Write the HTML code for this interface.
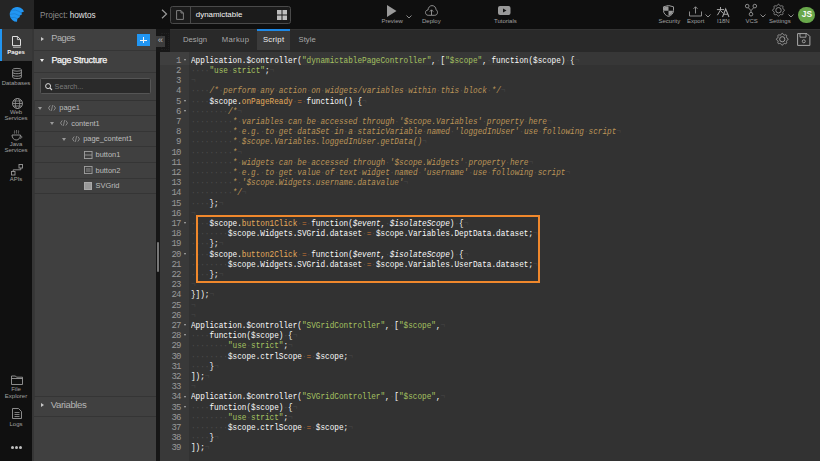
<!DOCTYPE html>
<html><head><meta charset="utf-8">
<style>
*{box-sizing:border-box;margin:0;padding:0}
html,body{width:820px;height:461px;overflow:hidden;background:#333;font-family:"Liberation Sans",sans-serif}
.a{position:absolute}
#hdr{left:0;top:0;width:820px;height:29px;background:#0f0f0f}
#logo{left:0;top:0;width:34px;height:29px;background:#252525}
.hl{position:absolute;font-size:6px;color:#a0a0a0;white-space:nowrap;line-height:7px}
#side{left:0;top:29px;width:32px;height:432px;background:#101010}
#sideact{left:0;top:29px;width:32px;height:32px;background:#3a3a3a;border-left:2px solid #2196f3}
.sl{position:absolute;font-size:6px;color:#a0a0a0;text-align:center;width:32px;left:0;line-height:6px}
#gap{left:32px;top:29px;width:2px;height:432px;background:#363636}
#panel{left:34px;top:29px;width:122px;height:432px;background:#404040}
.sep{position:absolute;left:34px;width:122px;height:1px;background:#353535}
.pt{position:absolute;font-size:8.2px;color:#b5b5b5;white-space:nowrap;line-height:10px}
.tri-r{position:absolute;width:0;height:0;border-top:2.1px solid transparent;border-bottom:2.1px solid transparent;border-left:3.8px solid #c8c8c8}
.tri-d{position:absolute;width:0;height:0;border-left:2.8px solid transparent;border-right:2.8px solid transparent;border-top:3.8px solid #f0f0f0}
.tri-d2{position:absolute;width:0;height:0;border-left:2.2px solid transparent;border-right:2.2px solid transparent;border-top:3px solid #999}
.tr{position:absolute;font-size:7.45px;color:#bdbdbd;white-space:nowrap;line-height:9px}
#split{left:156px;top:29px;width:4px;height:432px;background:#161616}
#ed{left:160px;top:52px;width:660px;height:409px;background:#323232}
#gut{left:160px;top:52px;width:29px;height:409px;background:#393939}
#tabs{left:160px;top:29px;width:660px;height:23px;background:#292929;border-top:1px solid #333}
.tab{position:absolute;font-size:7.7px;color:#a8a8a8;white-space:nowrap;line-height:9px;margin-top:-0.6px}
.ln{position:absolute;left:191.4px;font-family:"Liberation Mono",monospace;font-size:9px;transform:scaleX(0.85574);transform-origin:0 0;white-space:pre;color:#fafafa;line-height:10px;height:10px}
.gn{position:absolute;left:160px;width:20.7px;text-align:right;font-family:"Liberation Mono",monospace;font-size:9px;letter-spacing:-0.78px;color:#9a9a9a;line-height:10px;height:10px}
.fold{position:absolute;left:183.7px;width:0;height:0;border-left:1.5px solid transparent;border-right:1.5px solid transparent;border-top:2px solid #b0b0b0}
.ln i{font-style:normal}
.inv{color:#4c4c4c}
.eol{color:#474747}
.s{color:#a5c261}
.c{color:#bc9458;font-style:italic}
.c .inv{font-style:normal}
.f{color:#e4ab5c}
.o{color:#cc7833}
.p{font-style:italic}
svg{position:absolute;overflow:visible}
</style></head><body>
<div id="hdr" class="a"></div>
<div id="logo" class="a"></div>
<!-- logo -->
<svg style="left:0;top:0" width="34" height="29" viewBox="0 0 34 29"><path d="M24 11.6 A7.4 7.4 0 1 0 17 21.8 L17.3 18.7 L19.9 17.1 L19.6 15.8 L22.2 14.2 L21.2 12.7 Z" fill="#2196f3"/><path d="M10.5 10.8 Q15 8.6 21.2 12.7 M10 14.3 Q14.8 12.3 19.6 15.8 M11 17.8 Q14.3 16.3 17.3 18.7" fill="none" stroke="#1a78cc" stroke-width="0.7"/></svg>
<div class="hl" style="left:40px;top:11px;font-size:8.2px;line-height:9px"><span style="color:#8d8d8d">Project:</span><span style="display:inline-block;width:2px"></span><span style="color:#e3e3e3">howtos</span></div>
<!-- chevron -->
<svg style="left:161px;top:9px" width="7" height="10" viewBox="0 0 7 10"><path d="M1 0.8 L5.5 5 L1 9.2" fill="none" stroke="#9a9a9a" stroke-width="1.2"/></svg>
<!-- page box -->
<div class="a" style="left:170px;top:6px;width:121px;height:18px;border:1px solid #4a4a4a;border-radius:2.5px;background:#1b1b1b"></div>
<div class="a" style="left:189.5px;top:7px;width:1px;height:16px;background:#4a4a4a"></div>
<svg style="left:176px;top:10px" width="8" height="10" viewBox="0 0 8 10"><path d="M0.6 0.6 H5 L7.4 3 V9.4 H0.6 Z M5 0.6 V3 H7.4" fill="none" stroke="#8a8a8a" stroke-width="0.9"/></svg>
<div class="hl" style="left:195.8px;top:10.2px;font-size:7.9px;line-height:9px;color:#f4f4f4">dynamictable</div>
<svg style="left:277px;top:10px" width="10" height="10" viewBox="0 0 10 10"><rect x="0" y="0" width="4.5" height="4.5" fill="#bdbdbd"/><rect x="5.5" y="0" width="4.5" height="4.5" fill="#bdbdbd"/><rect x="0" y="5.5" width="4.5" height="4.5" fill="#bdbdbd"/><rect x="5.5" y="5.5" width="4.5" height="4.5" fill="#bdbdbd"/></svg>
<!-- Preview -->
<svg style="left:386.5px;top:4.5px" width="10" height="12" viewBox="0 0 10 12"><path d="M0 0 L9.5 6 L0 12 Z" fill="#9a9a9a"/></svg>
<svg style="left:406px;top:14.5px" width="6" height="4" viewBox="0 0 6 4"><path d="M0.5 0.5 L3 3 L5.5 0.5" fill="none" stroke="#9a9a9a" stroke-width="0.9"/></svg>
<div class="hl" style="left:381.5px;top:18.2px">Preview</div>
<!-- Deploy -->
<svg style="left:424.5px;top:4.5px" width="13" height="11" viewBox="0 0 13 11"><path d="M3.2 10.3 C1.5 10.3 0.5 9 0.5 7.5 C0.5 6 1.6 5 3 5 C3.2 2.5 4.8 0.6 7 0.6 C9.4 0.6 11 2.4 11 4.8 C12 5.2 12.5 6.2 12.5 7.4 C12.5 9 11.4 10.3 9.8 10.3 Z" fill="none" stroke="#9a9a9a" stroke-width="0.9"/><path d="M6.5 10 V5 M4.8 6.6 L6.5 4.8 L8.2 6.6" fill="none" stroke="#9a9a9a" stroke-width="0.9"/></svg>
<div class="hl" style="left:422px;top:18.2px">Deploy</div>
<!-- Tutorials -->
<svg style="left:497.5px;top:6px" width="13" height="9" viewBox="0 0 13 9"><rect x="0" y="0" width="12.5" height="9" rx="2" fill="#9a9a9a"/><path d="M5 2.5 L8.5 4.5 L5 6.5 Z" fill="#151515"/></svg>
<div class="hl" style="left:494px;top:18.2px">Tutorials</div>
<!-- Security -->
<svg style="left:662.5px;top:4.5px" width="11" height="12" viewBox="0 0 11 12"><path d="M5.5 0.5 L10.5 1.8 V5.5 C10.5 8.5 8.3 10.5 5.5 11.5 C2.7 10.5 0.5 8.5 0.5 5.5 V1.8 Z" fill="none" stroke="#9a9a9a" stroke-width="1"/><path d="M5.5 1.2 V5.8 H1 V2.2 Z" fill="#9a9a9a"/><path d="M5.5 5.8 H10 C9.9 8.2 8 10.1 5.5 10.9 Z" fill="#9a9a9a"/></svg>
<div class="hl" style="left:658.5px;top:18.2px">Security</div>
<!-- Export -->
<svg style="left:689px;top:5.5px" width="13" height="11" viewBox="0 0 13 11"><path d="M0.5 5.5 V10 H12.5 V5.5" fill="none" stroke="#9a9a9a" stroke-width="0.9"/><path d="M6.5 7.5 V0.8 M4.5 2.8 L6.5 0.8 L8.5 2.8" fill="none" stroke="#9a9a9a" stroke-width="0.9"/></svg>
<svg style="left:705px;top:13.8px" width="6" height="4" viewBox="0 0 6 4"><path d="M0.5 0.5 L3 3 L5.5 0.5" fill="none" stroke="#9a9a9a" stroke-width="0.9"/></svg>
<div class="hl" style="left:687px;top:18.2px">Export</div>
<!-- I18N -->
<svg style="left:712px;top:2px" width="22" height="16" viewBox="0 0 22 16"><path d="M4.9 7.6 H12 M8.5 5 V8.2 M8.5 8 L5.4 13.2 M8.6 8.6 L11.2 11.4" fill="none" stroke="#a8a8a8" stroke-width="1"/><path d="M10.5 15 L13.7 7 L17 15 M11.6 12.3 H15.9" fill="none" stroke="#a8a8a8" stroke-width="1.05"/></svg>
<div class="hl" style="left:717px;top:18.2px">I18N</div>
<!-- VCS -->
<svg style="left:745px;top:4px" width="12" height="12.5" viewBox="0 0 12 12.5"><circle cx="2.2" cy="2.1" r="1.8" fill="none" stroke="#9a9a9a" stroke-width="0.9"/><circle cx="9.8" cy="2.1" r="1.8" fill="none" stroke="#9a9a9a" stroke-width="0.9"/><circle cx="6" cy="10.2" r="1.8" fill="none" stroke="#9a9a9a" stroke-width="0.9"/><path d="M3.2 3.6 L6 6.6 L8.8 3.6 M6 6.6 V8.4" fill="none" stroke="#9a9a9a" stroke-width="0.9"/></svg>
<svg style="left:760px;top:14px" width="6" height="4" viewBox="0 0 6 4"><path d="M0.5 0.5 L3 3 L5.5 0.5" fill="none" stroke="#9a9a9a" stroke-width="0.9"/></svg>
<div class="hl" style="left:745.5px;top:18.2px">VCS</div>
<!-- Settings gear -->
<svg style="left:772px;top:4px" width="13" height="12.5" viewBox="-6.5 -6.25 13 12.5"><path d="M0.00 -5.95 L0.23 -5.92 L0.46 -5.83 L0.67 -5.69 L0.87 -5.49 L1.03 -5.20 L1.18 -4.91 L1.32 -4.69 L1.47 -4.52 L1.62 -4.39 L1.78 -4.30 L1.96 -4.25 L2.16 -4.23 L2.38 -4.25 L2.64 -4.30 L2.94 -4.41 L3.26 -4.49 L3.54 -4.50 L3.80 -4.45 L4.02 -4.35 L4.21 -4.21 L4.35 -4.02 L4.45 -3.80 L4.50 -3.54 L4.49 -3.26 L4.41 -2.94 L4.30 -2.64 L4.25 -2.38 L4.23 -2.16 L4.25 -1.96 L4.30 -1.78 L4.39 -1.62 L4.52 -1.47 L4.69 -1.32 L4.91 -1.18 L5.20 -1.03 L5.49 -0.87 L5.69 -0.67 L5.83 -0.46 L5.92 -0.23 L5.95 0.00 L5.92 0.23 L5.83 0.46 L5.69 0.67 L5.49 0.87 L5.20 1.03 L4.91 1.18 L4.69 1.32 L4.52 1.47 L4.39 1.62 L4.30 1.78 L4.25 1.96 L4.23 2.16 L4.25 2.38 L4.30 2.64 L4.41 2.94 L4.49 3.26 L4.50 3.54 L4.45 3.80 L4.35 4.02 L4.21 4.21 L4.02 4.35 L3.80 4.45 L3.54 4.50 L3.26 4.49 L2.94 4.41 L2.64 4.30 L2.38 4.25 L2.16 4.23 L1.96 4.25 L1.78 4.30 L1.62 4.39 L1.47 4.52 L1.32 4.69 L1.18 4.91 L1.03 5.20 L0.87 5.49 L0.67 5.69 L0.46 5.83 L0.23 5.92 L0.00 5.95 L-0.23 5.92 L-0.46 5.83 L-0.67 5.69 L-0.87 5.49 L-1.03 5.20 L-1.18 4.91 L-1.32 4.69 L-1.47 4.52 L-1.62 4.39 L-1.78 4.30 L-1.96 4.25 L-2.16 4.23 L-2.38 4.25 L-2.64 4.30 L-2.94 4.41 L-3.26 4.49 L-3.54 4.50 L-3.80 4.45 L-4.02 4.35 L-4.21 4.21 L-4.35 4.02 L-4.45 3.80 L-4.50 3.54 L-4.49 3.26 L-4.41 2.94 L-4.30 2.64 L-4.25 2.38 L-4.23 2.16 L-4.25 1.96 L-4.30 1.78 L-4.39 1.62 L-4.52 1.47 L-4.69 1.32 L-4.91 1.18 L-5.20 1.03 L-5.49 0.87 L-5.69 0.67 L-5.83 0.46 L-5.92 0.23 L-5.95 0.00 L-5.92 -0.23 L-5.83 -0.46 L-5.69 -0.67 L-5.49 -0.87 L-5.20 -1.03 L-4.91 -1.18 L-4.69 -1.32 L-4.52 -1.47 L-4.39 -1.62 L-4.30 -1.78 L-4.25 -1.96 L-4.23 -2.16 L-4.25 -2.38 L-4.30 -2.64 L-4.41 -2.94 L-4.49 -3.26 L-4.50 -3.54 L-4.45 -3.80 L-4.35 -4.02 L-4.21 -4.21 L-4.02 -4.35 L-3.80 -4.45 L-3.54 -4.50 L-3.26 -4.49 L-2.94 -4.41 L-2.64 -4.30 L-2.38 -4.25 L-2.16 -4.23 L-1.96 -4.25 L-1.78 -4.30 L-1.62 -4.39 L-1.47 -4.52 L-1.32 -4.69 L-1.18 -4.91 L-1.03 -5.20 L-0.87 -5.49 L-0.67 -5.69 L-0.46 -5.83 L-0.23 -5.92 Z" fill="none" stroke="#9a9a9a" stroke-width="0.9"/><circle r="2.7" fill="none" stroke="#9a9a9a" stroke-width="0.9"/></svg>
<svg style="left:787.5px;top:14px" width="6" height="4" viewBox="0 0 6 4"><path d="M0.5 0.5 L3 3 L5.5 0.5" fill="none" stroke="#9a9a9a" stroke-width="0.9"/></svg>
<div class="hl" style="left:769px;top:18.2px">Settings</div>
<!-- avatar -->
<div class="a" style="left:798.3px;top:6.8px;width:16.6px;height:16.6px;border-radius:50%;background:#69a84b"></div>
<div class="hl" style="left:798.6px;top:10.2px;width:16.6px;text-align:center;font-size:8.4px;font-weight:bold;color:#f8f8f8;line-height:9px">JS</div>

<!-- left sidebar -->
<div id="side" class="a"></div>
<div id="sideact" class="a"></div>
<svg style="left:11px;top:36px" width="11" height="12" viewBox="0 0 11 12"><path d="M1.5 0.5 H6.6 L9.5 3.4 V9.6 H1.5 Z" fill="none" stroke="#e8e8e8" stroke-width="0.95"/><path d="M6.4 0.6 V3.6 H9.4" fill="none" stroke="#e8e8e8" stroke-width="0.8"/><path d="M2 11.2 H9.8" stroke="#d0d0d0" stroke-width="0.9"/></svg>
<div class="sl" style="top:48.5px;color:#f2f2f2;font-weight:bold;font-size:6px">Pages</div>
<svg style="left:12px;top:68px" width="10" height="11" viewBox="0 0 10 11"><ellipse cx="5" cy="1.8" rx="4.4" ry="1.4" fill="none" stroke="#9a9a9a" stroke-width="0.9"/><path d="M0.6 1.8 V9.2 C0.6 10 2.5 10.6 5 10.6 C7.5 10.6 9.4 10 9.4 9.2 V1.8 M0.6 4.3 C0.6 5.1 2.5 5.7 5 5.7 C7.5 5.7 9.4 5.1 9.4 4.3 M0.6 6.8 C0.6 7.6 2.5 8.2 5 8.2 C7.5 8.2 9.4 7.6 9.4 6.8" fill="none" stroke="#9a9a9a" stroke-width="0.9"/></svg>
<div class="sl" style="top:80px">Databases</div>
<svg style="left:11.5px;top:97.5px" width="11" height="11" viewBox="0 0 11 11"><circle cx="5.5" cy="5.5" r="5" fill="none" stroke="#9a9a9a" stroke-width="0.9"/><ellipse cx="5.5" cy="5.5" rx="2.2" ry="5" fill="none" stroke="#9a9a9a" stroke-width="0.8"/><path d="M0.5 5.5 H10.5 M1.2 3 H9.8 M1.2 8 H9.8" stroke="#9a9a9a" stroke-width="0.8"/></svg>
<div class="sl" style="top:109px">Web</div>
<div class="sl" style="top:115px">Services</div>
<svg style="left:11px;top:128.5px" width="12" height="12" viewBox="0 0 12 12"><path d="M1 6 H9.5 C9.5 9 7.5 11 5.2 11 C3 11 1 9 1 6 Z" fill="none" stroke="#9a9a9a" stroke-width="0.9"/><path d="M9.5 7 C11.5 7 11.5 9.2 9 9.3" fill="none" stroke="#9a9a9a" stroke-width="0.8"/><path d="M3.5 4.5 C3 3.5 4 2.8 3.5 1.5 M5.5 4.5 C5 3.5 6 2.8 5.5 1 M7.5 4.5 C7 3.5 8 2.8 7.5 1.5" fill="none" stroke="#9a9a9a" stroke-width="0.7"/></svg>
<div class="sl" style="top:141px">Java</div>
<div class="sl" style="top:147px">Services</div>
<svg style="left:11px;top:163.5px" width="12" height="12" viewBox="0 0 12 12"><rect x="0.5" y="7.5" width="3.5" height="3.5" fill="none" stroke="#9a9a9a" stroke-width="0.9"/><rect x="8" y="0.5" width="3.5" height="3.5" fill="none" stroke="#9a9a9a" stroke-width="0.9"/><path d="M2.2 7.5 V5.8 H9.8 V4" fill="none" stroke="#9a9a9a" stroke-width="0.9"/></svg>
<div class="sl" style="top:176px">APIs</div>
<svg style="left:10.5px;top:375px" width="12" height="10" viewBox="0 0 12 10"><path d="M0.5 1 H4.5 L5.5 2.2 H11.5 V9.5 H0.5 Z M0.5 3.5 H11.5" fill="none" stroke="#9a9a9a" stroke-width="0.9"/></svg>
<div class="sl" style="top:386px">File</div>
<div class="sl" style="top:392.5px">Explorer</div>
<svg style="left:12px;top:408px" width="10" height="11" viewBox="0 0 10 11"><path d="M0.5 0.5 H6.5 L9.5 3.5 V10.5 H0.5 Z" fill="none" stroke="#9a9a9a" stroke-width="0.9"/><path d="M2.5 4.5 H7.5 M2.5 6.5 H7.5 M2.5 8.5 H7.5" stroke="#9a9a9a" stroke-width="0.8"/></svg>
<div class="sl" style="top:421px">Logs</div>
<div class="a" style="left:11px;top:446px;width:3px;height:3px;border-radius:50%;background:#c0c0c0"></div>
<div class="a" style="left:15px;top:446px;width:3px;height:3px;border-radius:50%;background:#c0c0c0"></div>
<div class="a" style="left:19px;top:446px;width:3px;height:3px;border-radius:50%;background:#c0c0c0"></div>

<!-- panel -->
<div id="gap" class="a"></div>
<div id="panel" class="a"></div>
<div class="tri-r" style="left:40.5px;top:36.8px"></div>
<div class="pt" style="left:51.3px;top:33px;font-size:9.2px;letter-spacing:-0.5px;line-height:11px">Pages</div>
<div class="a" style="left:137.4px;top:34px;width:12.6px;height:12px;background:#2196f3"></div>
<div class="a" style="left:140.4px;top:39.5px;width:6.8px;height:1.05px;background:#f4f4f4"></div>
<div class="a" style="left:143.3px;top:36.6px;width:1.05px;height:6.8px;background:#f4f4f4"></div>
<div class="sep" style="top:49.5px"></div>
<div class="tri-d" style="left:39.6px;top:58.8px"></div>
<div class="pt" style="left:51.4px;top:54.6px;color:#f6f6f6;font-size:9px;letter-spacing:-0.32px;-webkit-text-stroke:0.25px #f6f6f6;line-height:11px">Page Structure</div>
<div class="sep" style="top:71.5px"></div>
<div class="a" style="left:39.5px;top:78.4px;width:111.7px;height:16px;background:#2a2a2a;border:1px solid #555;border-radius:1.5px"></div>
<svg style="left:45px;top:82.7px" width="7.5" height="7.5" viewBox="0 0 7.5 7.5"><circle cx="3.1" cy="3.1" r="2.5" fill="none" stroke="#dcdcdc" stroke-width="1"/><path d="M5 5 L7 7" stroke="#dcdcdc" stroke-width="1.1"/></svg>
<div class="pt" style="left:54.6px;top:81.8px;color:#7a7a7a;font-size:7.2px">Search...</div>
<!-- tree -->
<div class="a" style="left:34px;top:99.5px;width:122px;height:1px;background:#333"></div>
<div class="a" style="left:34px;top:99.5px;width:1px;height:300px;background:#383838"></div>
<div class="sep" style="top:115.3px"></div>
<div class="sep" style="top:130.9px"></div>
<div class="sep" style="top:146.4px"></div>
<div class="sep" style="top:162px"></div>
<div class="sep" style="top:177.7px"></div>
<div class="sep" style="top:193.3px"></div>

<div class="tri-d2" style="left:38px;top:106.6px"></div>
<svg style="left:48.4px;top:104.8px" width="8" height="6" viewBox="0 0 8 6"><path d="M2.2 0.5 L0.5 3 L2.2 5.5 M5.8 0.5 L7.5 3 L5.8 5.5 M4.6 0.2 L3.4 5.8" fill="none" stroke="#9a9a9a" stroke-width="0.8"/></svg>
<div class="tr" style="left:59.3px;top:103.2px">page1</div>
<div class="tri-d2" style="left:49.8px;top:122.2px"></div>
<svg style="left:60.2px;top:120.4px" width="8" height="6" viewBox="0 0 8 6"><path d="M2.2 0.5 L0.5 3 L2.2 5.5 M5.8 0.5 L7.5 3 L5.8 5.5 M4.6 0.2 L3.4 5.8" fill="none" stroke="#9a9a9a" stroke-width="0.8"/></svg>
<div class="tr" style="left:71.2px;top:118.8px">content1</div>
<div class="tri-d2" style="left:61.8px;top:137.7px"></div>
<svg style="left:72.2px;top:135.9px" width="8" height="6" viewBox="0 0 8 6"><path d="M2.2 0.5 L0.5 3 L2.2 5.5 M5.8 0.5 L7.5 3 L5.8 5.5 M4.6 0.2 L3.4 5.8" fill="none" stroke="#9a9a9a" stroke-width="0.8"/></svg>
<div class="tr" style="left:83.2px;top:134.3px">page_content1</div>
<svg style="left:83.8px;top:150.6px" width="8.5" height="8" viewBox="0 0 8.5 8"><rect x="0.45" y="0.45" width="7.6" height="7.1" fill="none" stroke="#a0a0a0" stroke-width="0.9"/><path d="M0.5 4 H8" stroke="#a0a0a0" stroke-width="0.8"/></svg>
<div class="tr" style="left:95.5px;top:149.9px">button1</div>
<svg style="left:83.8px;top:166.2px" width="8.5" height="8" viewBox="0 0 8.5 8"><rect x="0.45" y="0.45" width="7.6" height="7.1" fill="none" stroke="#a0a0a0" stroke-width="0.9"/><path d="M2 3 H6.5 M2 5 H6.5" stroke="#a0a0a0" stroke-width="0.8"/></svg>
<div class="tr" style="left:95.5px;top:165.5px">button2</div>
<div class="a" style="left:84px;top:181.8px;width:8.4px;height:8.1px;background:#999;border:0.5px solid #aaa"></div>
<div class="tr" style="left:95.5px;top:181.1px">SVGrid</div>

<div class="sep" style="top:395.5px"></div>
<div class="sep" style="top:415.5px"></div>
<div class="tri-r" style="left:40.5px;top:403.3px"></div>
<div class="pt" style="left:50.8px;top:398.7px;font-size:9.6px;letter-spacing:-0.42px;line-height:11px">Variables</div>

<!-- splitter -->
<div id="split" class="a"></div>
<div class="a" style="left:157px;top:241.7px;width:2px;height:30.3px;background:#777;border-radius:1px"></div>

<!-- tabs -->
<div id="tabs" class="a"></div>
<div class="a" style="left:156px;top:29px;width:14px;height:22.5px;background:#171717"></div><div class="a" style="left:160.5px;top:33px;width:8.5px;height:16.5px;border:1px dotted #202020"></div>
<div class="a" style="left:156px;top:35.5px;width:9px;height:11px;background:#3c3c3c"></div>
<div class="a" style="left:156px;top:35.3px;width:9px;text-align:center;font-size:9.5px;color:#bdbdbd;line-height:10px">&laquo;</div>
<div class="a" style="left:257px;top:29px;width:33px;height:21px;background:#3b3b3b"></div>
<div class="a" style="left:257px;top:29px;width:33px;height:1.6px;background:#1e88e5"></div>
<div class="tab" style="left:183px;top:36px">Design</div>
<div class="tab" style="left:221.8px;top:36px;letter-spacing:0.3px">Markup</div>
<div class="tab" style="left:262.9px;top:36px;color:#f0f0f0;letter-spacing:0.3px">Script</div>
<div class="tab" style="left:298.6px;top:36px">Style</div>
<svg style="left:775.7px;top:33px" width="12.5" height="12.5" viewBox="-6.25 -6.25 12.5 12.5"><path d="M0.00 -5.85 L0.23 -5.82 L0.45 -5.73 L0.66 -5.59 L0.85 -5.39 L1.01 -5.10 L1.15 -4.81 L1.30 -4.60 L1.44 -4.42 L1.58 -4.29 L1.74 -4.20 L1.92 -4.16 L2.11 -4.14 L2.33 -4.17 L2.58 -4.22 L2.89 -4.32 L3.21 -4.41 L3.48 -4.42 L3.73 -4.37 L3.95 -4.28 L4.14 -4.14 L4.28 -3.95 L4.37 -3.73 L4.42 -3.48 L4.41 -3.21 L4.32 -2.89 L4.22 -2.58 L4.17 -2.33 L4.14 -2.11 L4.16 -1.92 L4.20 -1.74 L4.29 -1.58 L4.42 -1.44 L4.60 -1.30 L4.81 -1.15 L5.10 -1.01 L5.39 -0.85 L5.59 -0.66 L5.73 -0.45 L5.82 -0.23 L5.85 0.00 L5.82 0.23 L5.73 0.45 L5.59 0.66 L5.39 0.85 L5.10 1.01 L4.81 1.15 L4.60 1.30 L4.42 1.44 L4.29 1.58 L4.20 1.74 L4.16 1.92 L4.14 2.11 L4.17 2.33 L4.22 2.58 L4.32 2.89 L4.41 3.21 L4.42 3.48 L4.37 3.73 L4.28 3.95 L4.14 4.14 L3.95 4.28 L3.73 4.37 L3.48 4.42 L3.21 4.41 L2.89 4.32 L2.58 4.22 L2.33 4.17 L2.11 4.14 L1.92 4.16 L1.74 4.20 L1.58 4.29 L1.44 4.42 L1.30 4.60 L1.15 4.81 L1.01 5.10 L0.85 5.39 L0.66 5.59 L0.45 5.73 L0.23 5.82 L0.00 5.85 L-0.23 5.82 L-0.45 5.73 L-0.66 5.59 L-0.85 5.39 L-1.01 5.10 L-1.15 4.81 L-1.30 4.60 L-1.44 4.42 L-1.58 4.29 L-1.74 4.20 L-1.92 4.16 L-2.11 4.14 L-2.33 4.17 L-2.58 4.22 L-2.89 4.32 L-3.21 4.41 L-3.48 4.42 L-3.73 4.37 L-3.95 4.28 L-4.14 4.14 L-4.28 3.95 L-4.37 3.73 L-4.42 3.48 L-4.41 3.21 L-4.32 2.89 L-4.22 2.58 L-4.17 2.33 L-4.14 2.11 L-4.16 1.92 L-4.20 1.74 L-4.29 1.58 L-4.42 1.44 L-4.60 1.30 L-4.81 1.15 L-5.10 1.01 L-5.39 0.85 L-5.59 0.66 L-5.73 0.45 L-5.82 0.23 L-5.85 0.00 L-5.82 -0.23 L-5.73 -0.45 L-5.59 -0.66 L-5.39 -0.85 L-5.10 -1.01 L-4.81 -1.15 L-4.60 -1.30 L-4.42 -1.44 L-4.29 -1.58 L-4.20 -1.74 L-4.16 -1.92 L-4.14 -2.11 L-4.17 -2.33 L-4.22 -2.58 L-4.32 -2.89 L-4.41 -3.21 L-4.42 -3.48 L-4.37 -3.73 L-4.28 -3.95 L-4.14 -4.14 L-3.95 -4.28 L-3.73 -4.37 L-3.48 -4.42 L-3.21 -4.41 L-2.89 -4.32 L-2.58 -4.22 L-2.33 -4.17 L-2.11 -4.14 L-1.92 -4.16 L-1.74 -4.20 L-1.58 -4.29 L-1.44 -4.42 L-1.30 -4.60 L-1.15 -4.81 L-1.01 -5.10 L-0.85 -5.39 L-0.66 -5.59 L-0.45 -5.73 L-0.23 -5.82 Z" fill="none" stroke="#a8a8a8" stroke-width="0.9"/><circle r="2.6" fill="none" stroke="#a8a8a8" stroke-width="0.9"/></svg>
<svg style="left:797px;top:33px" width="13.5" height="13" viewBox="0 0 13.5 13"><path d="M0.6 0.6 H10 L12.9 3.5 V12.4 H0.6 Z" fill="none" stroke="#a8a8a8" stroke-width="1"/><path d="M3 0.6 V4.2 H9 V0.6" fill="none" stroke="#a8a8a8" stroke-width="0.9"/><circle cx="6.8" cy="8.3" r="1.5" fill="none" stroke="#a8a8a8" stroke-width="0.9"/></svg>

<!-- editor -->
<div id="ed" class="a"></div>
<div id="gut" class="a"></div>
<div class="a" style="left:160px;top:52px;width:660px;height:12.5px;background:#373737"></div>
<div class="a" style="left:160px;top:52px;width:29px;height:12.5px;background:#3f3f3f"></div>
<div class="gn" style="top:55.70px">1</div><div class=fold style=top:59.00px></div>
<div class="gn" style="top:65.90px">2</div>
<div class="gn" style="top:76.10px">3</div>
<div class="gn" style="top:86.30px">4</div>
<div class="gn" style="top:96.50px">5</div><div class=fold style=top:99.80px></div>
<div class="gn" style="top:106.70px">6</div><div class=fold style=top:110.00px></div>
<div class="gn" style="top:116.90px">7</div>
<div class="gn" style="top:127.10px">8</div>
<div class="gn" style="top:137.30px">9</div>
<div class="gn" style="top:147.50px">10</div>
<div class="gn" style="top:157.70px">11</div>
<div class="gn" style="top:167.90px">12</div>
<div class="gn" style="top:178.10px">13</div>
<div class="gn" style="top:188.30px">14</div>
<div class="gn" style="top:198.50px">15</div>
<div class="gn" style="top:208.70px">16</div>
<div class="gn" style="top:218.90px">17</div><div class=fold style=top:222.20px></div>
<div class="gn" style="top:229.10px">18</div>
<div class="gn" style="top:239.30px">19</div>
<div class="gn" style="top:249.50px">20</div><div class=fold style=top:252.80px></div>
<div class="gn" style="top:259.70px">21</div>
<div class="gn" style="top:269.90px">22</div>
<div class="gn" style="top:280.10px">23</div>
<div class="gn" style="top:290.30px">24</div>
<div class="gn" style="top:300.50px">25</div>
<div class="gn" style="top:310.70px">26</div>
<div class="gn" style="top:320.90px">27</div><div class=fold style=top:324.20px></div>
<div class="gn" style="top:331.10px">28</div><div class=fold style=top:334.40px></div>
<div class="gn" style="top:341.30px">29</div>
<div class="gn" style="top:351.50px">30</div>
<div class="gn" style="top:361.70px">31</div>
<div class="gn" style="top:371.90px">32</div>
<div class="gn" style="top:382.10px">33</div>
<div class="gn" style="top:392.30px">34</div><div class=fold style=top:395.60px></div>
<div class="gn" style="top:402.50px">35</div><div class=fold style=top:405.80px></div>
<div class="gn" style="top:412.70px">36</div>
<div class="gn" style="top:422.90px">37</div>
<div class="gn" style="top:433.10px">38</div>
<div class="gn" style="top:443.30px">39</div>
<div class="ln" style="top:55.70px">Application.$controller(<span class="s">&quot;dynamictablePageController&quot;</span>,<i class="inv">·</i>[<span class="s">&quot;$scope&quot;</span>,<i class="inv">·</i>function($scope)<i class="inv">·</i>{<i class="inv eol">¬</i></div>
<div class="ln" style="top:65.90px"><i class="inv">····</i><span class="s">&quot;use<i class="inv">·</i>strict&quot;</span>;<i class="inv eol">¬</i></div>
<div class="ln" style="top:76.10px"><i class="inv eol">¬</i></div>
<div class="ln" style="top:86.30px"><i class="inv">····</i><span class="c">/*<i class="inv">·</i>perform<i class="inv">·</i>any<i class="inv">·</i>action<i class="inv">·</i>on<i class="inv">·</i>widgets/variables<i class="inv">·</i>within<i class="inv">·</i>this<i class="inv">·</i>block<i class="inv">·</i>*/</span><i class="inv eol">¬</i></div>
<div class="ln" style="top:96.50px"><i class="inv">····</i>$scope.<span class="f">onPageReady</span><i class="inv">·</i><span class="o">=</span><i class="inv">·</i>function()<i class="inv">·</i>{<i class="inv eol">¬</i></div>
<div class="ln" style="top:106.70px"><i class="inv">········</i><span class="c">/*</span><i class="inv eol">¬</i></div>
<div class="ln" style="top:116.90px"><i class="inv">·········</i><span class="c">*<i class="inv">·</i>variables<i class="inv">·</i>can<i class="inv">·</i>be<i class="inv">·</i>accessed<i class="inv">·</i>through<i class="inv">·</i>&#x27;$scope.Variables&#x27;<i class="inv">·</i>property<i class="inv">·</i>here</span><i class="inv eol">¬</i></div>
<div class="ln" style="top:127.10px"><i class="inv">·········</i><span class="c">*<i class="inv">·</i>e.g.<i class="inv">·</i>to<i class="inv">·</i>get<i class="inv">·</i>dataSet<i class="inv">·</i>in<i class="inv">·</i>a<i class="inv">·</i>staticVariable<i class="inv">·</i>named<i class="inv">·</i>&#x27;loggedInUser&#x27;<i class="inv">·</i>use<i class="inv">·</i>following<i class="inv">·</i>script</span><i class="inv eol">¬</i></div>
<div class="ln" style="top:137.30px"><i class="inv">·········</i><span class="c">*<i class="inv">·</i>$scope.Variables.loggedInUser.getData()</span><i class="inv eol">¬</i></div>
<div class="ln" style="top:147.50px"><i class="inv">·········</i><span class="c">*</span><i class="inv eol">¬</i></div>
<div class="ln" style="top:157.70px"><i class="inv">·········</i><span class="c">*<i class="inv">·</i>widgets<i class="inv">·</i>can<i class="inv">·</i>be<i class="inv">·</i>accessed<i class="inv">·</i>through<i class="inv">·</i>&#x27;$scope.Widgets&#x27;<i class="inv">·</i>property<i class="inv">·</i>here</span><i class="inv eol">¬</i></div>
<div class="ln" style="top:167.90px"><i class="inv">·········</i><span class="c">*<i class="inv">·</i>e.g.<i class="inv">·</i>to<i class="inv">·</i>get<i class="inv">·</i>value<i class="inv">·</i>of<i class="inv">·</i>text<i class="inv">·</i>widget<i class="inv">·</i>named<i class="inv">·</i>&#x27;username&#x27;<i class="inv">·</i>use<i class="inv">·</i>following<i class="inv">·</i>script</span><i class="inv eol">¬</i></div>
<div class="ln" style="top:178.10px"><i class="inv">·········</i><span class="c">*<i class="inv">·</i>&#x27;$scope.Widgets.username.datavalue&#x27;</span><i class="inv eol">¬</i></div>
<div class="ln" style="top:188.30px"><i class="inv">·········</i><span class="c">*/</span><i class="inv eol">¬</i></div>
<div class="ln" style="top:198.50px"><i class="inv">····</i>};<i class="inv eol">¬</i></div>
<div class="ln" style="top:208.70px"><i class="inv eol">¬</i></div>
<div class="ln" style="top:218.90px"><i class="inv">····</i>$scope.<span class="f">button1Click</span><i class="inv">·</i><span class="o">=</span><i class="inv">·</i>function(<span class="p">$event</span>,<i class="inv">·</i><span class="p">$isolateScope</span>)<i class="inv">·</i>{<i class="inv eol">¬</i></div>
<div class="ln" style="top:229.10px"><i class="inv">········</i>$scope.Widgets.SVGrid.dataset<i class="inv">·</i><span class="o">=</span><i class="inv">·</i>$scope.Variables.DeptData.dataset;<i class="inv eol">¬</i></div>
<div class="ln" style="top:239.30px"><i class="inv">····</i>};<i class="inv eol">¬</i></div>
<div class="ln" style="top:249.50px"><i class="inv">····</i>$scope.<span class="f">button2Click</span><i class="inv">·</i><span class="o">=</span><i class="inv">·</i>function(<span class="p">$event</span>,<i class="inv">·</i><span class="p">$isolateScope</span>)<i class="inv">·</i>{<i class="inv eol">¬</i></div>
<div class="ln" style="top:259.70px"><i class="inv">········</i>$scope.Widgets.SVGrid.dataset<i class="inv">·</i><span class="o">=</span><i class="inv">·</i>$scope.Variables.UserData.dataset;<i class="inv eol">¬</i></div>
<div class="ln" style="top:269.90px"><i class="inv">····</i>};<i class="inv eol">¬</i></div>
<div class="ln" style="top:280.10px"><i class="inv eol">¬</i></div>
<div class="ln" style="top:290.30px">}]);<i class="inv eol">¬</i></div>
<div class="ln" style="top:300.50px"><i class="inv eol">¬</i></div>
<div class="ln" style="top:310.70px"><i class="inv eol">¬</i></div>
<div class="ln" style="top:320.90px">Application.$controller(<span class="s">&quot;SVGridController&quot;</span>,<i class="inv">·</i>[<span class="s">&quot;$scope&quot;</span>,<i class="inv eol">¬</i></div>
<div class="ln" style="top:331.10px"><i class="inv">····</i>function($scope)<i class="inv">·</i>{<i class="inv eol">¬</i></div>
<div class="ln" style="top:341.30px"><i class="inv">········</i><span class="s">&quot;use<i class="inv">·</i>strict&quot;</span>;<i class="inv eol">¬</i></div>
<div class="ln" style="top:351.50px"><i class="inv">········</i>$scope.ctrlScope<i class="inv">·</i><span class="o">=</span><i class="inv">·</i>$scope;<i class="inv eol">¬</i></div>
<div class="ln" style="top:361.70px"><i class="inv">····</i>}<i class="inv eol">¬</i></div>
<div class="ln" style="top:371.90px">]);<i class="inv eol">¬</i></div>
<div class="ln" style="top:382.10px"><i class="inv eol">¬</i></div>
<div class="ln" style="top:392.30px">Application.$controller(<span class="s">&quot;SVGridController&quot;</span>,<i class="inv">·</i>[<span class="s">&quot;$scope&quot;</span>,<i class="inv eol">¬</i></div>
<div class="ln" style="top:402.50px"><i class="inv">····</i>function($scope)<i class="inv">·</i>{<i class="inv eol">¬</i></div>
<div class="ln" style="top:412.70px"><i class="inv">········</i><span class="s">&quot;use<i class="inv">·</i>strict&quot;</span>;<i class="inv eol">¬</i></div>
<div class="ln" style="top:422.90px"><i class="inv">········</i>$scope.ctrlScope<i class="inv">·</i><span class="o">=</span><i class="inv">·</i>$scope;<i class="inv eol">¬</i></div>
<div class="ln" style="top:433.10px"><i class="inv">····</i>}<i class="inv eol">¬</i></div>
<div class="ln" style="top:443.30px">]);<i class="inv eol">¬</i></div>
<div class="a" style="left:196px;top:215px;width:344px;height:68px;border:2px solid #f0882c"></div>
</body></html>
